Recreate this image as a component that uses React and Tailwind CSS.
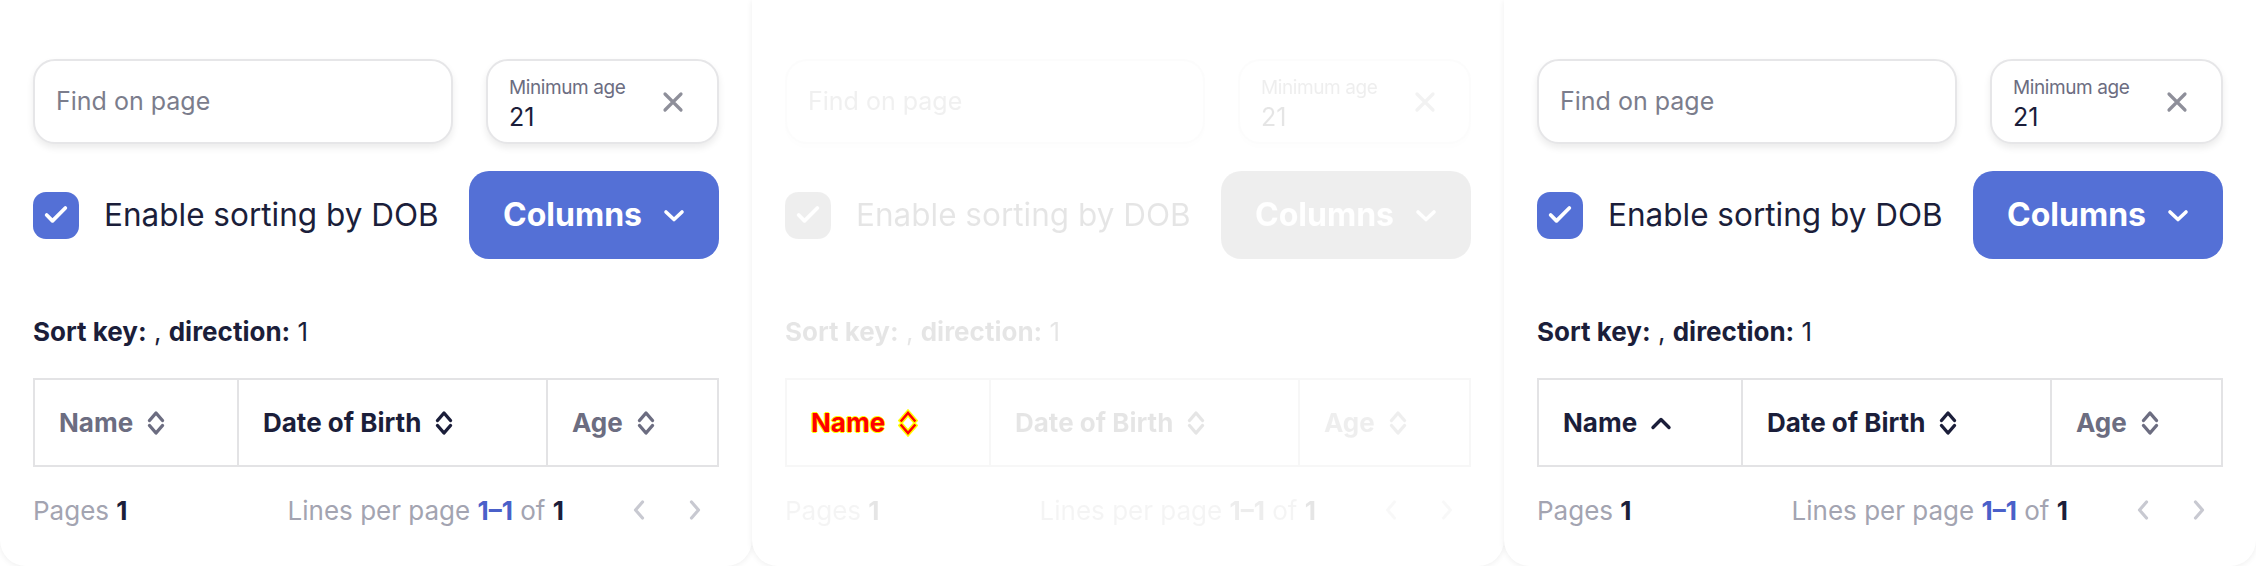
import { Check } from 'lucide-react'

const FADE = 'opacity-[0.11] grayscale'

function UpDownIcon({ className }) {
  return (
    <svg viewBox="0 0 20 28" className={className} fill="none" stroke="currentColor" strokeWidth="3.4" strokeLinecap="round" strokeLinejoin="round">
      <path d="M3.5 11.5 10 4l6.5 7.5" />
      <path d="M3.5 16.5 10 24l6.5-7.5" />
    </svg>
  )
}

function UpIcon({ className }) {
  return (
    <svg viewBox="0 0 22 14" className={className} fill="none" stroke="currentColor" strokeWidth="3.4" strokeLinecap="round" strokeLinejoin="round">
      <path d="M3 11.5 11 3.5l8 8" />
    </svg>
  )
}

// drag ghost of the header: red with a yellow rim
function GhostIcon() {
  return (
    <svg viewBox="0 0 20 28" className="h-[28px] w-[20px]" fill="none" strokeLinecap="square" strokeLinejoin="miter">
      <path d="M3.5 11.5 10 4l6.5 7.5M3.5 16.5 10 24l6.5-7.5" stroke="#ffff00" strokeWidth="5.5" />
      <path d="M3.5 11.5 10 4l6.5 7.5M3.5 16.5 10 24l6.5-7.5" stroke="#ff0000" strokeWidth="2.6" />
    </svg>
  )
}

function PagerChevron({ dir }) {
  return (
    <svg viewBox="0 0 14 22" className="h-[22px] w-[14px]" fill="none" stroke="currentColor" strokeWidth="3.2" strokeLinecap="round" strokeLinejoin="round">
      {dir === 'left' ? <path d="M10.5 3 3.5 11l7 8" /> : <path d="M3.5 3l7 8-7 8" />}
    </svg>
  )
}

function HeadCell({ label, dark, sorted, ghost, faded, border, width }) {
  const tone = dark ? 'text-[#1b1e3a]' : 'text-[#6c6d81]'
  return (
    <th className={`${width} border-2 ${border} pl-[24px] text-left text-[26px] font-bold`}>
      {ghost ? (
        <div className="flex items-center gap-[13px] text-[#ff0000] [text-shadow:1px_0_#ff0,-1px_0_#ff0,0_1px_#ff0,0_-1px_#ff0]">
          {label}
          <GhostIcon />
        </div>
      ) : (
        <div className={`flex items-center gap-[13px] ${tone} ${faded ? FADE : ''}`}>
          {label}
          {sorted ? <UpIcon className="h-[14px] w-[22px]" /> : <UpDownIcon className="h-[28px] w-[20px]" />}
        </div>
      )}
    </th>
  )
}

function Panel({ variant }) {
  const faded = variant === 'ghost'
  const f = faded ? FADE : ''
  const border = faded ? 'border-[#f7f7f7]' : 'border-[#e3e3e5]'
  const sorted = variant === 'sorted'

  return (
    <div className="h-[566px] w-[752px] shrink-0 rounded-b-[26px] bg-white px-[33px] pt-[59px] shadow-[0_1px_6px_rgba(0,0,0,0.07)]">
      <div className={`flex gap-[33px] ${f}`}>
        <div className="flex h-[85px] w-[420px] items-center rounded-[22px] border-2 border-[#e6e6e8] bg-white pl-[21px] text-[25px] text-[#7b7d8c] shadow-[0_4px_7px_rgba(0,0,0,0.08)]">
          Find on page
        </div>
        <div className="flex h-[85px] flex-1 justify-between rounded-[22px] border-2 border-[#e6e6e8] bg-white pl-[21px] pr-[33px] shadow-[0_4px_7px_rgba(0,0,0,0.08)]">
          <div className="flex flex-col pt-[17px]">
            <span className="text-[19px] leading-[20px] tracking-[-0.4px] text-[#6c6d81]">Minimum age</span>
            <span className="mt-[6px] text-[25px] leading-[26px] text-[#1b1e3a]">21</span>
          </div>
          <div className="flex items-center">
            <svg viewBox="0 0 22 22" className="h-[22px] w-[22px] text-[#8e8f9a]" fill="none" stroke="currentColor" strokeWidth="3.2" strokeLinecap="round">
              <path d="M3 3l16 16M19 3 3 19" />
            </svg>
          </div>
        </div>
      </div>

      <div className="mt-[27px] flex h-[88px] items-center justify-between">
        <label className={`flex items-center gap-[25px] ${f}`}>
          <span className="flex h-[47px] w-[46px] items-center justify-center rounded-[13px] bg-[#5470d6]">
            <Check size={28} strokeWidth={3.2} className="text-white" />
          </span>
          <span className="text-[31.5px] text-[#1b1e3a]">Enable sorting by DOB</span>
        </label>
        <button type="button" className={`flex h-[88px] w-[250px] items-center justify-center gap-[21px] rounded-[20px] bg-[#5470d6] text-[32px] font-bold text-white ${f}`}>
          Columns
          <svg viewBox="0 0 22 13" className="h-[13px] w-[22px]" fill="none" stroke="currentColor" strokeWidth="3.6" strokeLinecap="round" strokeLinejoin="round">
            <path d="M3 3l8 7.5L19 3" />
          </svg>
        </button>
      </div>

      <div className={`mt-[57px] text-[26px] leading-[32px] text-[#1b1e3a] ${f}`}>
        <b>Sort key:</b> , <b>direction:</b> 1
      </div>

      <table className="mt-[30px] w-full border-collapse">
        <thead>
          <tr className="h-[87px]">
            <HeadCell label="Name" width="w-[204px]" border={border} dark={sorted} sorted={sorted} ghost={faded} />
            <HeadCell label="Date of Birth" width="w-[309px]" border={border} dark faded={faded} />
            <HeadCell label="Age" border={border} faded={faded} />
          </tr>
        </thead>
      </table>

      <div className={`mt-[19px] flex h-[48px] items-center justify-between text-[26px] ${f}`}>
        <div>
          <span className="text-[#a3a4b1]">Pages </span>
          <span className="font-bold text-[#1b1e3a]">1</span>
        </div>
        <div className="flex items-center">
          <span className="text-[#a3a4b1]">
            Lines per page <b className="text-[#4a60c9]">1–1</b> of <b className="text-[#1b1e3a]">1</b>
          </span>
          <div className="ml-[51px] flex gap-2 text-[#c8c9d1]">
            <button type="button" className="flex h-12 w-12 items-center justify-center">
              <PagerChevron dir="left" />
            </button>
            <button type="button" className="flex h-12 w-12 items-center justify-center">
              <PagerChevron dir="right" />
            </button>
          </div>
        </div>
      </div>
    </div>
  )
}

export default function App() {
  return (
    <div className="flex h-[566px] w-[2256px] overflow-hidden bg-white font-['Inter',sans-serif]">
      <Panel variant="normal" />
      <Panel variant="ghost" />
      <Panel variant="sorted" />
    </div>
  )
}
